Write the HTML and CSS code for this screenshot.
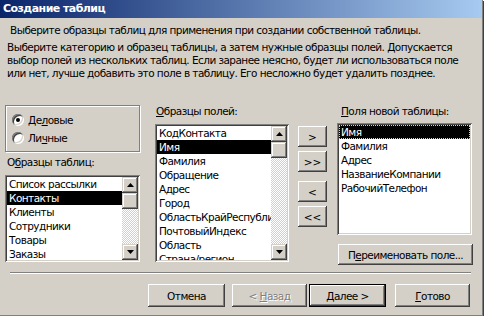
FILE: index.html
```html
<!DOCTYPE html>
<html lang="ru">
<head>
    <meta charset="UTF-8">
    <meta name="viewport" content="width=device-width, initial-scale=1.0">
    <title>Создание таблиц</title>
    <link rel="stylesheet" href="styles.css">
</head>
<body>
    <div class="window">
        <div class="titlebar">Создание таблиц</div>

        <p class="intro">Выберите образцы таблиц для применения при создании собственной таблицы.</p>
        <p class="desc">Выберите категорию и образец таблицы, а затем нужные образцы полей. Допускается<br>выбор полей из нескольких таблиц. Если заранее неясно, будет ли использоваться поле<br>или нет, лучше добавить это поле в таблицу. Его несложно будет удалить позднее.</p>

        <div class="main">
            <div class="col col-tables">
                <div class="groupbox">
                    <div class="radio"><span class="radio-dot checked"></span>Де<u>л</u>овые</div>
                    <div class="radio"><span class="radio-dot"></span>Ли<u>ч</u>ные</div>
                </div>
                <div class="caption caption-tables">О<u>б</u>разцы таблиц:</div>
                <div class="listbox list-tables">
                    <ul class="items">
                        <li>Список рассылки</li>
                        <li class="selected">Контакты</li>
                        <li>Клиенты</li>
                        <li>Сотрудники</li>
                        <li>Товары</li>
                        <li>Заказы</li>
                    </ul>
                    <div class="scrollbar">
                        <div class="sb-btn"><svg width="7" height="4" viewBox="0 0 7 4"><path d="M3.5 0L7 4H0z" fill="#000"/></svg></div>
                        <div class="sb-thumb"></div>
                        <div class="sb-track"></div>
                        <div class="sb-btn"><svg width="7" height="4" viewBox="0 0 7 4"><path d="M0 0H7L3.5 4z" fill="#000"/></svg></div>
                    </div>
                </div>
            </div>

            <div class="col col-fields">
                <div class="caption"><u>О</u>бразцы полей:</div>
                <div class="listbox list-fields">
                    <ul class="items">
                        <li>КодКонтакта</li>
                        <li class="selected">Имя</li>
                        <li>Фамилия</li>
                        <li>Обращение</li>
                        <li>Адрес</li>
                        <li>Город</li>
                        <li>ОбластьКрайРеспублика</li>
                        <li>ПочтовыйИндекс</li>
                        <li>Область</li>
                        <li>Страна/регион</li>
                    </ul>
                    <div class="scrollbar">
                        <div class="sb-btn"><svg width="7" height="4" viewBox="0 0 7 4"><path d="M3.5 0L7 4H0z" fill="#000"/></svg></div>
                        <div class="sb-thumb"></div>
                        <div class="sb-track"></div>
                        <div class="sb-btn"><svg width="7" height="4" viewBox="0 0 7 4"><path d="M0 0H7L3.5 4z" fill="#000"/></svg></div>
                    </div>
                </div>
            </div>

            <div class="col col-move">
                <button class="btn move">&gt;</button>
                <button class="btn move">&gt;&gt;</button>
                <button class="btn move move-back">&lt;</button>
                <button class="btn move">&lt;&lt;</button>
            </div>

            <div class="col col-new">
                <div class="caption"><u>П</u>оля новой таблицы:</div>
                <div class="listbox list-new">
                    <ul class="items">
                        <li class="selected focused">Имя</li>
                        <li>Фамилия</li>
                        <li>Адрес</li>
                        <li>НазваниеКомпании</li>
                        <li>РабочийТелефон</li>
                    </ul>
                </div>
                <button class="btn rename">П<u>е</u>реименовать поле...</button>
            </div>
        </div>

        <div class="separator"></div>

        <div class="footer">
            <button class="btn wide">Отмена</button>
            <button class="btn wide back disabled">&lt; <u>Н</u>азад</button>
            <button class="btn wide default"><u>Д</u>алее &gt;</button>
            <button class="btn wide finish"><u>Г</u>отово</button>
        </div>
    </div>
</body>
</html>
```

FILE: styles.css
```css
html, body {
    margin: 0;
    padding: 0;
    background: #fff;
    overflow: hidden;
}
body {
    font-family: "DejaVu Sans", Verdana, sans-serif;
    font-size: 10.5px;
    letter-spacing: -0.55px;
    color: #000;
}
.window {
    width: 482px;
    height: 315px;
    background: #d4d0c8;
    border-right: 1px solid #808080;
    border-bottom: 1px solid #808080;
    box-shadow: 1px 1px 0 #404040, 0 4px 0 #404040;
    overflow: hidden;
}
.titlebar {
    height: 18px;
    line-height: 18px;
    padding-left: 3px;
    background: linear-gradient(90deg, #0a246a, #a6caf0);
    color: #fff;
    font-weight: bold;
    font-size: 11px;
}
.intro {
    margin: 6px 0 0 10px;
    line-height: 13px;
    white-space: nowrap;
}
.desc {
    margin: 4px 0 0 7px;
    line-height: 13px;
    white-space: nowrap;
}
u {
    text-decoration: underline;
    text-underline-offset: 1px;
}

.main {
    display: flex;
    align-items: flex-start;
    margin-top: 25px;
    padding-left: 5px;
}
.col {
    display: flex;
    flex-direction: column;
}
.col-tables {
    width: 135px;
}
.col-fields {
    width: 134px;
    margin-left: 15px;
}
.col-move {
    width: 29px;
    margin-left: 9px;
    padding-top: 21px;
}
.col-new {
    width: 135px;
    margin-left: 10px;
}
.caption {
    line-height: 13px;
    height: 13px;
    padding-left: 1px;
    margin-bottom: 6px;
}
.col-new .caption {
    padding-left: 4px;
    margin-bottom: 5px;
}
.caption-tables {
    margin-top: 4px;
    margin-bottom: 6px;
    padding-left: 2px;
}

.groupbox {
    border: 1px solid #808080;
    box-shadow: inset 1px 1px #fff, 1px 1px 0 #fff;
    padding: 7px 0 0 6px;
    box-sizing: border-box;
    height: 47px;
}
.radio {
    display: flex;
    align-items: center;
    height: 13px;
    margin-bottom: 5px;
}
.radio-dot {
    position: relative;
    width: 12px;
    height: 12px;
    border-radius: 50%;
    background: #fff;
    box-shadow: inset 1px 1px #808080, inset -1px -1px #fff, inset 2px 2px #404040, inset -2px -2px #d4d0c8;
    margin-right: 4px;
}
.radio-dot.checked::after {
    content: "";
    position: absolute;
    left: 4px;
    top: 4px;
    width: 4px;
    height: 4px;
    border-radius: 50%;
    background: #000;
}

.listbox {
    display: flex;
    background: #fff;
    padding: 2px;
    box-sizing: border-box;
    box-shadow: inset 1px 1px #808080, inset -1px -1px #fff, inset 2px 2px #404040, inset -2px -2px #d4d0c8;
}
.list-tables {
    height: 87px;
}
.list-fields {
    height: 138px;
}
.list-new {
    height: 112px;
}
.items {
    flex: 1;
    list-style: none;
    margin: 0;
    padding: 0;
    overflow: hidden;
}
.items li {
    height: 14px;
    line-height: 14px;
    padding-left: 2px;
    white-space: nowrap;
}
.items li.selected {
    background: #000;
    color: #fff;
}
.items li.focused {
    outline: 1px dotted #d4d0c8;
    outline-offset: -1px;
}

.scrollbar {
    width: 16px;
    display: flex;
    flex-direction: column;
}
.sb-btn, .sb-thumb {
    width: 16px;
    height: 16px;
    background: #d4d0c8;
    box-shadow: inset -1px -1px #404040, inset 1px 1px #d4d0c8, inset -2px -2px #808080, inset 2px 2px #fff;
    display: flex;
    align-items: center;
    justify-content: center;
    flex: none;
}
.sb-track {
    flex: 1;
    background-color: #d4d0c8;
    background-image: conic-gradient(#fff 25%, #d4d0c8 0 50%, #fff 0 75%, #d4d0c8 0);
    background-size: 2px 2px;
}

.btn {
    font-family: inherit;
    font-size: inherit;
    letter-spacing: inherit;
    color: #000;
    background: #d4d0c8;
    border: none;
    padding: 0;
    box-shadow: inset -1px -1px #404040, inset 1px 1px #fff, inset -2px -2px #808080, inset 2px 2px #d4d0c8;
}
.move {
    width: 29px;
    height: 21px;
    margin-bottom: 4px;
    letter-spacing: 0;
}
.move-back {
    margin-top: 5px;
}
.rename {
    margin-top: 9px;
    margin-left: 1px;
    width: 135px;
    height: 21px;
}

.separator {
    margin: 7px 0 0 10px;
    width: 461px;
    border-top: 1px solid #808080;
    border-bottom: 1px solid #fff;
}
.footer {
    display: flex;
    padding: 10px 0 0 148px;
}
.wide {
    width: 77px;
    height: 23px;
}
.back {
    width: 75px;
    margin-left: 7px;
}
.disabled {
    color: #808080;
    text-shadow: 1px 1px 0 #fff;
}
.default {
    margin-left: 2px;
    box-shadow: inset 0 0 0 1px #000, inset -2px -2px #404040, inset 2px 2px #fff, inset -3px -3px #808080;
}
.finish {
    width: 75px;
    margin-left: 9px;
}
```
